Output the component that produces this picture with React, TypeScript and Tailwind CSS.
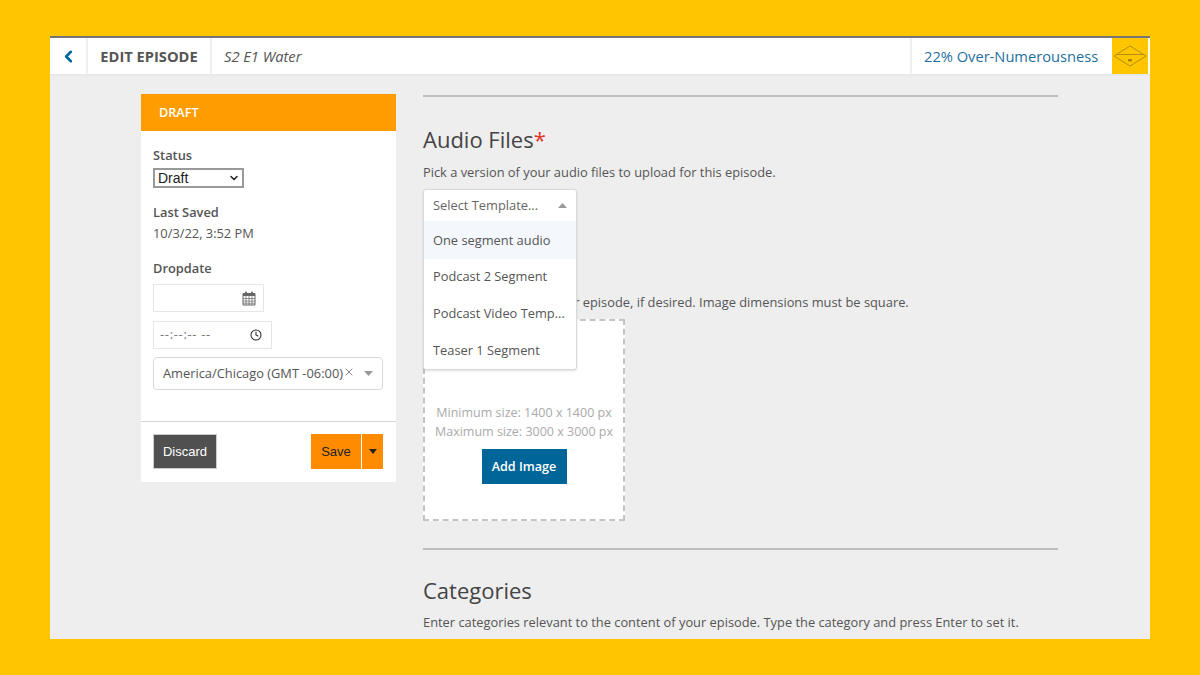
import React from "react";
import { ChevronLeft, ChevronDown, Clock, X } from "lucide-react";

const os = "font-['Open_Sans',sans-serif]";

function Calendar() {
  return (
    <svg width="14" height="15" viewBox="0 0 14 15" className="text-[#666]">
      <rect x="3" y="0.5" width="2" height="3" rx="0.8" fill="currentColor" />
      <rect x="9" y="0.5" width="2" height="3" rx="0.8" fill="currentColor" />
      <path d="M1 2.5h12v11.5H1z" fill="none" stroke="currentColor" />
      <path d="M1 3h12v2H1z" fill="currentColor" />
      <path d="M1 7.5h12M1 10h12M1 12.2h12M4 5V14M7 5V14M10 5V14" stroke="currentColor" strokeWidth="0.7" />
    </svg>
  );
}

function Caret({ up = false, color = "#999", w = 9 }: { up?: boolean; color?: string; w?: number }) {
  return (
    <svg width={w} height="5" viewBox="0 0 10 5" preserveAspectRatio="none">
      <path d={up ? "M0 5L5 0L10 5Z" : "M0 0L5 5L10 0Z"} fill={color} />
    </svg>
  );
}

function Logo() {
  return (
    <svg width="34" height="24" viewBox="0 0 34 24" fill="none" stroke="#a88a10" strokeWidth="0.9">
      <path d="M17 2L33 12L17 22L1 12Z" />
      <path d="M3.5 10.5H30.5" />
      <rect x="15" y="15" width="4" height="2.5" fill="#a88a10" stroke="none" />
    </svg>
  );
}

export default function App() {
  return (
    <div className={`w-[1200px] h-[675px] overflow-hidden bg-[#ffc600] pt-[36px] px-[50px] ${os}`}>
      <div className="w-[1100px] h-[603px] overflow-hidden bg-[#eeeeee] flex flex-col">
        <header className="h-[40px] shrink-0 flex bg-white border-t-2 border-t-[#757575] border-b-2 border-b-[#e9e9e9] text-[#555] text-[14.67px]">
          <div className="w-[38px] flex items-center justify-center border-r-2 border-[#eeeeee] text-[#006699]">
            <ChevronLeft size={19} strokeWidth={3.2} />
          </div>
          <div className="w-[124px] flex items-center justify-center border-r-2 border-[#eeeeee] font-bold whitespace-nowrap">
            EDIT EPISODE
          </div>
          <div className="flex-1 flex items-center pl-[12px] italic">S2 E1 Water</div>
          <div className="w-[202px] flex items-center pl-[12px] border-l-2 border-[#eeeeee] text-[#1f6f9f] whitespace-nowrap">
            22% Over-Numerousness
          </div>
          <div className="w-[36px] mr-[2px] flex items-center justify-center bg-[#ffc600]">
            <Logo />
          </div>
        </header>

        <div className="flex-1 flex items-start pl-[91px] pt-[18px] gap-[27px]">
          <aside className="w-[255px] shrink-0 bg-white">
            <div className="h-[37px] bg-[#ff9c00] flex items-center pl-[18px] text-[12.67px] font-semibold text-white">
              DRAFT
            </div>
            <div className="pl-[12px] pr-[13px] pt-[16px] h-[291px] border-b border-[#d4d4d4] text-[#555] text-[12.85px]">
              <div className="font-semibold leading-[16px]">Status</div>
              <div className="w-[91px] h-[20px] mt-[5px] border-2 border-[#999999] bg-white flex items-center justify-between pl-[3px] pr-[2px] font-['Liberation_Sans',sans-serif] text-[14px] text-[#222]">
                <span>Draft</span>
                <ChevronDown size={12} strokeWidth={3} />
              </div>
              <div className="mt-[16px] font-semibold leading-[16px]">Last Saved</div>
              <div className="mt-[5px] leading-[16px]">10/3/22, 3:52 PM</div>
              <div className="mt-[19px] font-semibold leading-[16px]">Dropdate</div>
              <div className="mt-[8px] w-[111px] h-[28px] border border-[#e6e6e6] flex items-center justify-end pr-[7px]">
                <Calendar />
              </div>
              <div className="mt-[9px] w-[119px] h-[28px] border border-[#e6e6e6] flex items-center justify-between pl-[6px] pr-[9px] text-[#777] tracking-[0.7px]">
                <span>--:--:-- --</span>
                <Clock size={12} strokeWidth={2.2} className="text-[#333]" />
              </div>
              <div className="mt-[8px] w-[230px] h-[33px] border border-[#d9d9d9] rounded-[4px] flex items-center pl-[9px]">
                <span className="whitespace-nowrap">America/Chicago (GMT -06:00)</span>
                <X size={12} className="text-[#888] -mt-[3px] shrink-0" />
                <span className="ml-[9px] flex"><Caret /></span>
              </div>
            </div>
            <div className="h-[60px] pl-[12px] pr-[13px] pt-[12px] flex items-start justify-between font-['Liberation_Sans',sans-serif] text-[13px]">
              <div className="w-[64px] h-[35px] bg-[#505050] border border-[#ccc] flex items-center justify-center text-white">
                Discard
              </div>
              <div className="flex gap-[1px]">
                <div className="w-[50px] h-[35px] bg-[#ff8c00] flex items-center justify-center text-[#222]">Save</div>
                <div className="w-[21px] h-[35px] bg-[#ff8c00] flex items-center justify-center">
                  <Caret color="#222" w={8} />
                </div>
              </div>
            </div>
          </aside>

          <main className="w-[635px] shrink-0 text-[#555] mt-[1px] text-[12.85px]">
            <div className="h-[2px] bg-[#bdbdbd]" />
            <h2 className="mt-[27px] text-[22px] leading-[30px] text-[#444]">
              Audio Files<span className="text-[#e0342b]">*</span>
            </h2>
            <p className="mt-[10px] leading-[16px]">Pick a version of your audio files to upload for this episode.</p>
            <div className="relative mt-[9px] h-[105px]">
              <div className="absolute left-0 top-0 z-10 w-[154px] h-[181px] bg-white border border-[#d9d9d9] rounded-[3px] shadow-sm whitespace-nowrap">
                <div className="h-[31px] pl-[9px] pr-[9px] flex items-center justify-between text-[#666]">
                  <span>Select Template...</span>
                  <Caret up />
                </div>
                <div className="h-[38px] pl-[9px] pt-[2px] flex items-center bg-[#f4f8fc]">One segment audio</div>
                <div className="h-[36px] pl-[9px] flex items-center">Podcast 2 Segment</div>
                <div className="h-[37px] pl-[9px] flex items-center">Podcast Video Temp...</div>
                <div className="h-[37px] pl-[9px] flex items-center">Teaser 1 Segment</div>
              </div>
            </div>
            <p className="leading-[16px] whitespace-nowrap">Add a cover image to your episode, if desired. Image dimensions must be square.</p>
            <div className="mt-[9px] w-[202px] h-[202px] bg-white border-2 border-dashed border-[#c4c4c4] flex flex-col items-center">
              <div className="mt-[82px] text-[12.5px] leading-[19px] text-[#aaa] text-center whitespace-nowrap">
                Minimum size: 1400 x 1400 px
                <br />
                Maximum size: 3000 x 3000 px
              </div>
              <div className="mt-[8px] w-[85px] h-[35px] pt-[2px] bg-[#006699] flex items-center justify-center text-[12.6px] font-semibold text-white">
                Add Image
              </div>
            </div>
            <div className="mt-[27px] h-[2px] bg-[#bdbdbd]" />
            <h2 className="mt-[25px] text-[22px] leading-[30px] text-[#444]">Categories</h2>
            <p className="mt-[9px] leading-[16px]">Enter categories relevant to the content of your episode. Type the category and press Enter to set it.</p>
            <div className="mt-[9px] h-[30px] bg-white border border-[#d9d9d9] rounded-[3px]" />
          </main>
        </div>
      </div>
    </div>
  );
}
